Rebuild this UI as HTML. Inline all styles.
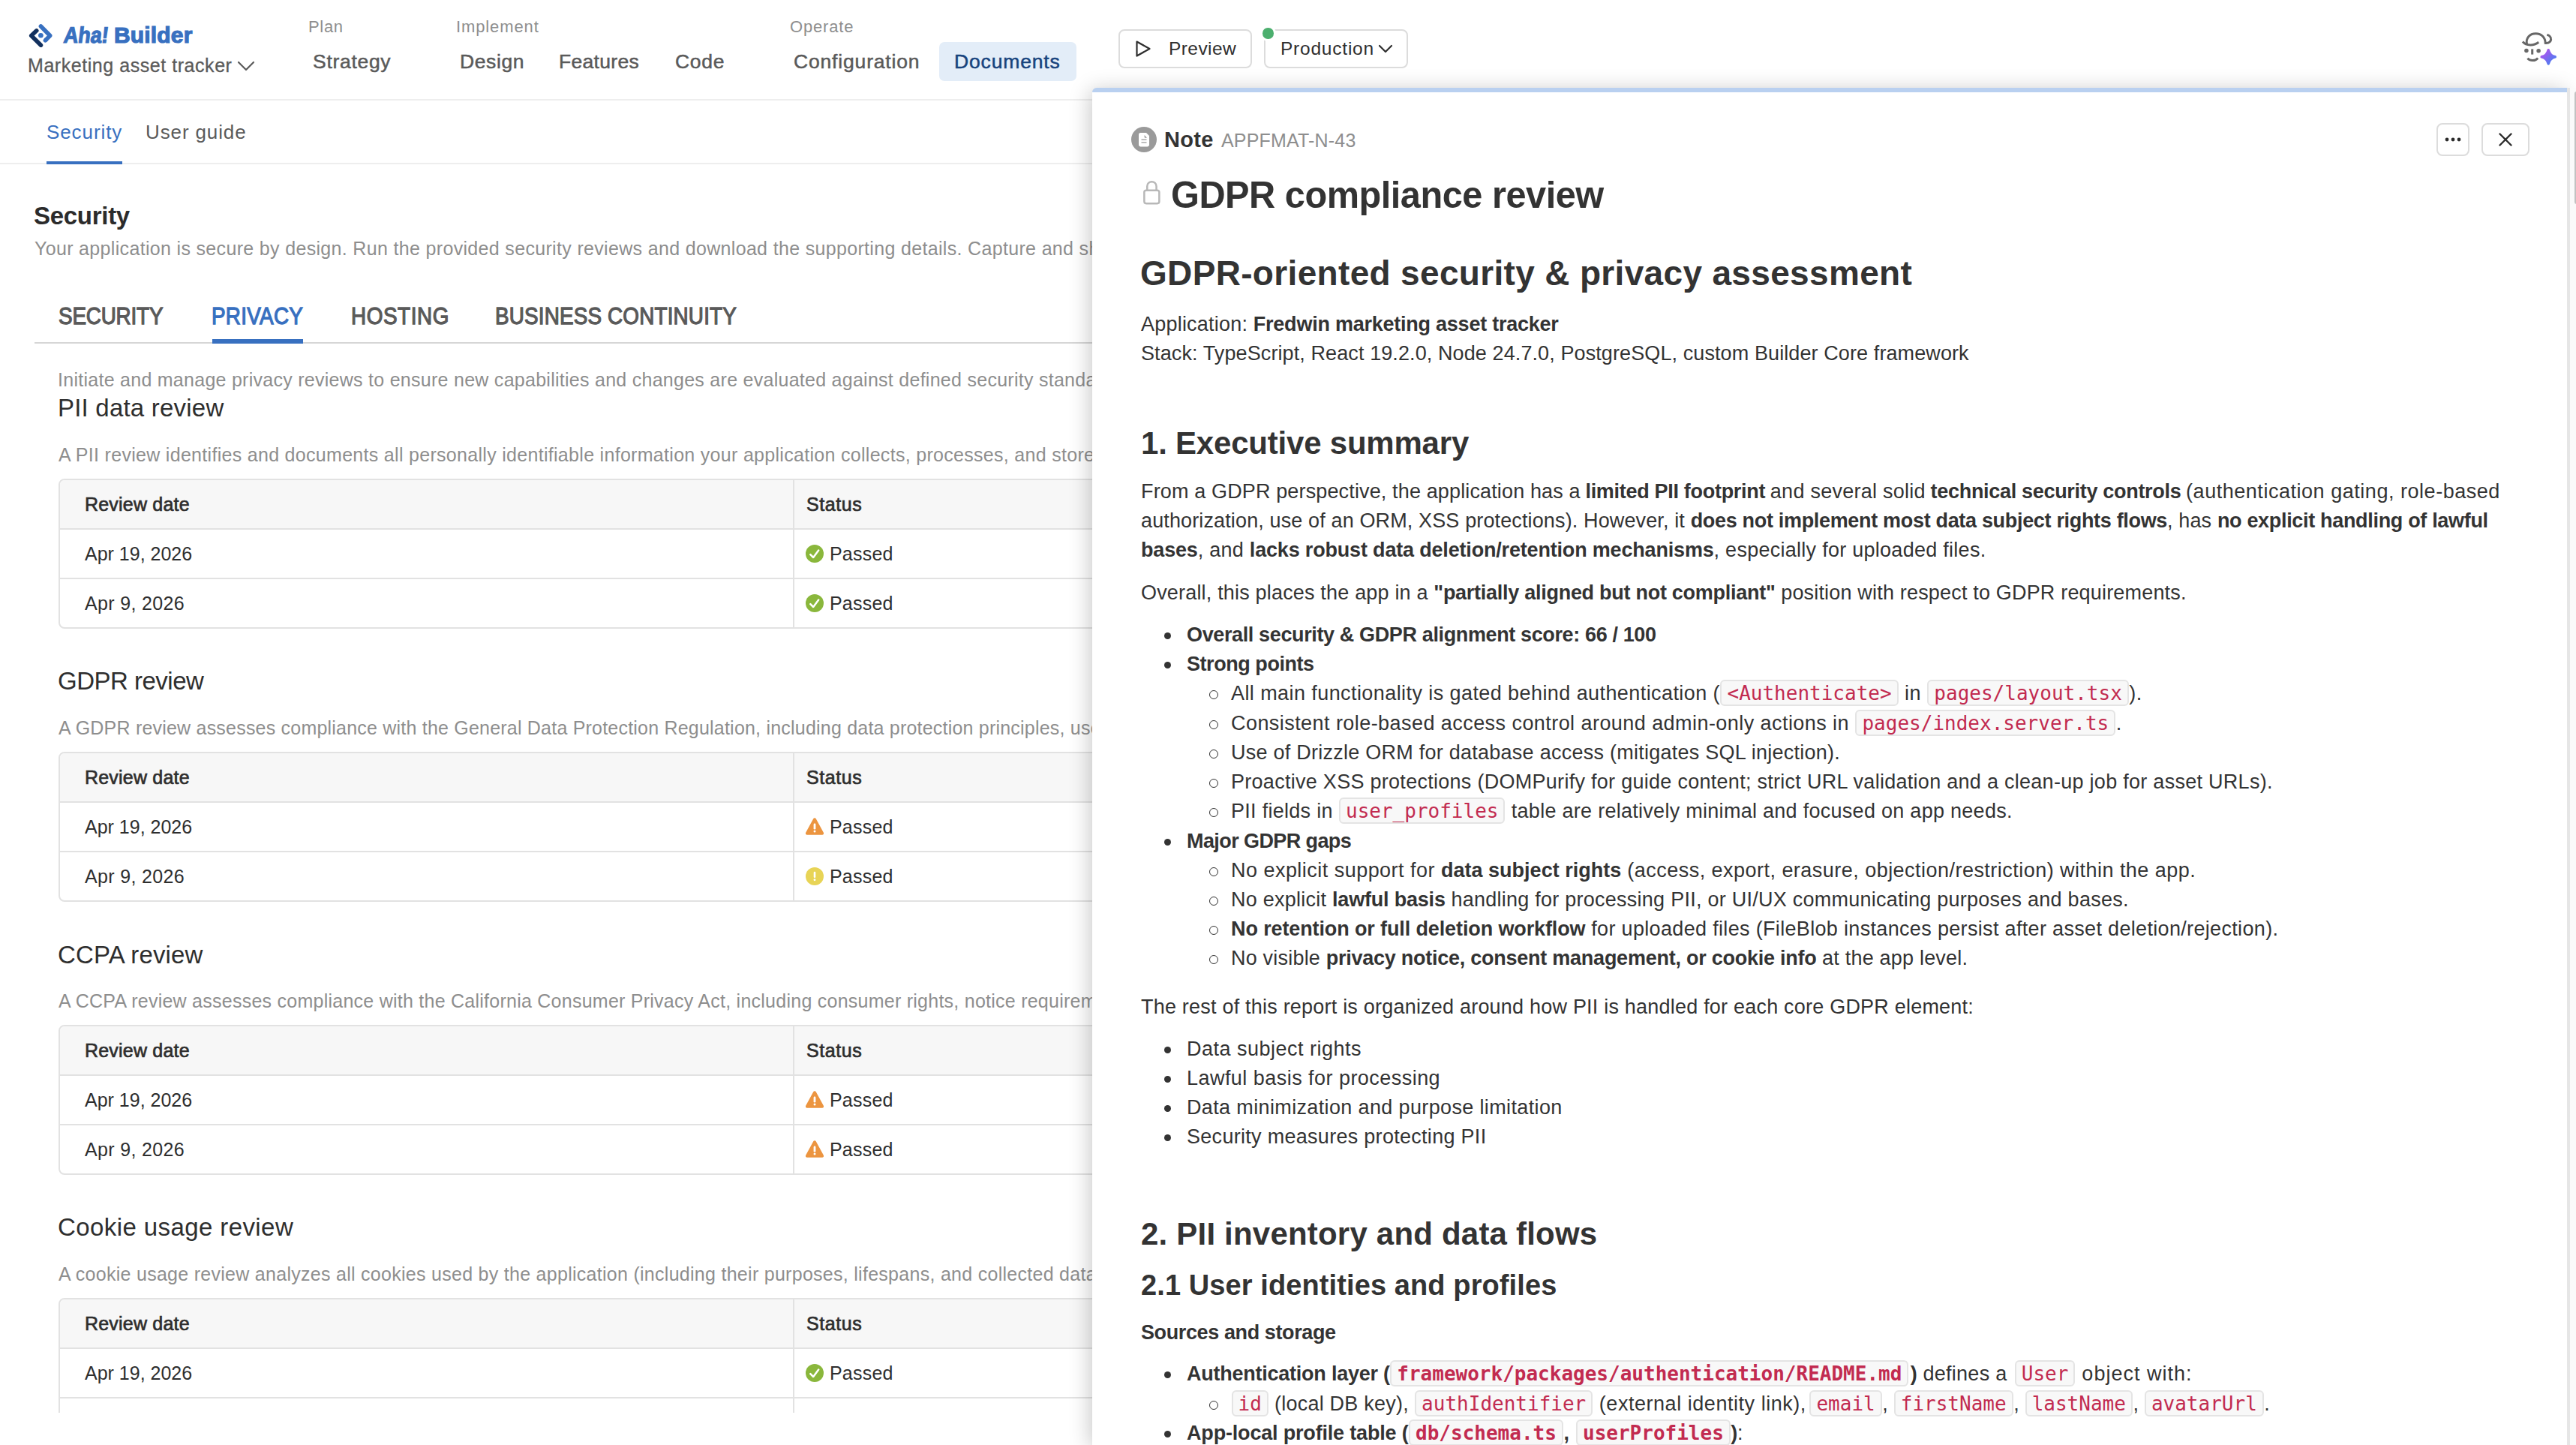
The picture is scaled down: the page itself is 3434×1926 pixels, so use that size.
<!DOCTYPE html>
<html lang="en">
<head>
<meta charset="utf-8">
<title>GDPR compliance review - Aha! Builder</title>
<style>
*{box-sizing:border-box;margin:0;padding:0}
html,body{width:3434px;height:1926px;overflow:hidden;background:#fff}
body{font-family:"Liberation Sans",sans-serif;color:#333;position:relative}
.abs{position:absolute;white-space:nowrap}
@media (min-resolution:1.5dppx){html{zoom:.5}}
/* ---------- header ---------- */
#hdr{position:absolute;left:0;top:0;width:3434px;height:134px;border-bottom:2px solid #eee;background:#fff}
#brand,#brand2{left:83px;top:29px;font-size:30px;line-height:36px;font-weight:bold;color:#3870c0;-webkit-text-stroke:1.2px #3870c0}
#brand2{left:152px}
#brand i{display:inline-block;font-style:normal;transform:skewX(-7deg) scaleX(.9);transform-origin:0 100%}
#proj{left:37px;top:70px;font-size:25px;line-height:34px;color:#5a5a5a;-webkit-text-stroke:.3px #5a5a5a}
.grp{top:22px;font-size:22px;line-height:28px;color:#8e8e8e}
.nav{top:64px;font-size:26.5px;line-height:36px;color:#5a5a5a;-webkit-text-stroke:.5px #5a5a5a}
#docpill{left:1252px;top:56px;width:183px;height:52px;border-radius:7px;background:#e3edf8}
#docs{color:#17437d;-webkit-text-stroke:.5px #17437d}
.btn{position:absolute;border:2px solid #dcdcdc;border-radius:8px;background:#fff}
.btntx{font-size:24.5px;line-height:30px;color:#2e2e2e}
/* ---------- left page ---------- */
#subtabs{position:absolute;left:0;top:136px;width:3434px;height:83px;border-bottom:2px solid #eee}
.st{top:158px;font-size:26px;line-height:36px}
#leftclip{position:absolute;left:0;top:219px;width:1456px;height:1664px;overflow:hidden}
.h-sec{font-size:33px;line-height:40px;font-weight:bold;color:#2b2b2b}
.muted{font-size:25px;line-height:32px;color:#8e8e8e}
.tab{top:402px;font-size:32px;line-height:38px;color:#5a5a5a;-webkit-text-stroke:1.3px #5a5a5a}
.tab span{display:inline-block;transform:scaleX(.87);transform-origin:0 50%}
.h3{font-size:33px;line-height:40px;color:#2e2e2e}
.tbl{position:absolute;left:78px;width:1500px;border:2px solid #e2e2e2;border-radius:8px;overflow:hidden;background:#fff}
.tr{height:66px;border-bottom:2px solid #e2e2e2;position:relative;font-size:25px;line-height:64px;color:#2e2e2e}
.tr:last-child{border-bottom:0;height:64px}
.tr.th{background:#f7f7f7;color:#2e2e2e;-webkit-text-stroke:.7px #2e2e2e}
.tr .c1{position:absolute;left:33px;top:0}
.tr .c2{position:absolute;left:977px;top:0;bottom:0;border-left:2px solid #e2e2e2;padding-left:17px;width:600px}
.tr .c2 span{position:absolute;left:47px;top:0}
.ic{position:absolute;left:15px;top:20px;width:24px;height:24px}
/* ---------- right panel ---------- */
#panel{position:absolute;left:1456px;top:117px;width:1966px;height:1809px;background:#fff;border-top:6px solid #b9d0f0;border-radius:6px 0 0 0;box-shadow:-3px 3px 28px rgba(0,0,0,.22)}
#sbar{z-index:2;position:absolute;left:3422px;top:117px;width:12px;height:1809px;background:#fafafa;border-left:4px solid #e6e6e6}
#thumb{z-index:3;position:absolute;left:3432px;top:122px;width:4px;height:150px;background:#c2c2c2;border-radius:3px 0 0 3px}
#pc{position:absolute;left:-1456px;top:-123px;width:3434px;height:1926px}
.bd{font-size:27px;line-height:39px;color:#333}
.bd b{color:#333}
.hh{font-weight:bold;color:#333}
code{font-family:"DejaVu Sans Mono","Liberation Mono",monospace;font-size:26px;line-height:30px;color:#c22b50;background:#f8f8f8;border:2px solid #e4e4e4;border-radius:6px;padding:1px 7px 0;margin:0 .5px;letter-spacing:0 !important;display:inline-block;height:35px;vertical-align:baseline;position:relative;top:0px}
b code{font-weight:bold}
ul{list-style:none}
li{position:relative}
.l1>li:before{content:"";position:absolute;left:-30.5px;top:15.5px;width:9px;height:9px;border-radius:50%;background:#333}
.l2{padding-left:59px}
.l1>li.nb:before{display:none}
.l2>li:before{content:"";position:absolute;left:-29.5px;top:15px;width:10px;height:10px;border-radius:50%;border:1.4px solid #333;background:#fff}
[id^=f_],[class^=f_]{letter-spacing:var(--ls,0px)}
.bd b{letter-spacing:calc(var(--ls,0px) - .45px)}
#f_p1b,#f_p1c,#f_p1d,#f_p1e{margin-left:-.8px}
/*FIT-START*/
#f_aha{--ls:-0.19px}
#f_app{--ls:0.21px}
#f_appf{--ls:0.18px}
#f_b1{--ls:0.08px}
#f_b10{--ls:0.25px}
#f_b11{--ls:0.33px}
#f_b12{--ls:0.20px}
#f_b2{--ls:0.00px}
#f_b3{--ls:0.42px}
#f_b4{--ls:0.44px}
#f_b5{--ls:0.25px}
#f_b6{--ls:0.28px}
#f_b7{--ls:0.28px}
#f_b8{--ls:-0.14px}
#f_b9{--ls:0.47px}
#f_bld{--ls:0.17px}
#f_brand{--ls:-0.73px}
#f_c1{--ls:0.50px}
#f_c2{--ls:0.46px}
#f_c3{--ls:0.36px}
#f_c4{--ls:0.29px}
#f_code{--ls:0.68px}
#f_config{--ls:0.83px}
#f_d1a{--ls:0.21px}
#f_d1b{--ls:0.27px}
#f_d1c{--ls:1.00px}
#f_d2a{--ls:0.22px}
#f_d2b{--ls:0.54px}
#f_d3a{--ls:0.27px}
#f_design{--ls:0.60px}
#f_docs{--ls:0.84px}
#f_es{--ls:-0.21px}
#f_feat{--ls:0.31px}
#f_h1{--ls:0.21px}
#f_h2{--ls:-0.50px}
#f_h3{--ls:0.14px}
#f_h4{--ls:0.41px}
#f_hsec{--ls:-0.29px}
#f_impl{--ls:0.88px}
#f_m0,.f_m0{--ls:0.33px}
#f_m1,.f_m1{--ls:0.27px}
#f_m2,.f_m2{--ls:0.30px}
#f_m3,.f_m3{--ls:0.21px}
#f_m4,.f_m4{--ls:0.25px}
#f_m5,.f_m5{--ls:0.28px}
#f_note{--ls:0.33px}
#f_oper{--ls:0.84px}
#f_p1a{--ls:0.14px}
#f_p1b{--ls:0.15px}
#f_p1c{--ls:0.26px}
#f_p1d{--ls:0.14px}
#f_p1e{--ls:0.53px}
#f_p2{--ls:0.13px}
#f_p3{--ls:0.27px}
#f_p4{--ls:0.18px}
#f_p5{--ls:0.21px}
#f_pii{--ls:0.20px}
#f_plan{--ls:0.66px}
#f_prev{--ls:0.42px}
#f_prod{--ls:0.78px}
#f_proj{--ls:0.55px}
#f_rh1{--ls:0.33px}
#f_sec{--ls:0.91px}
#f_ss{--ls:-0.39px}
#f_stack{--ls:0.10px}
#f_strat{--ls:0.70px}
#f_t1{--ls:-0.21px}
#f_t2{--ls:0.33px}
#f_t3{--ls:0.67px}
#f_t4{--ls:0.20px}
#f_title{--ls:-0.52px}
#f_ug{--ls:0.88px}
#f_ui{--ls:0.10px}
.f_date{--ls:0.00px}
.f_date2{--ls:0.35px}
.f_passed{--ls:0.20px}
.f_rd{--ls:0.20px}
.f_status{--ls:0.60px}
/*FIT-END*/
</style>
</head>
<body>

<!-- ================= HEADER ================= -->
<div id="hdr">
  <svg class="abs" style="left:30px;top:20px" width="50" height="50" viewBox="0 0 50 50" fill="none" stroke-width="5.5" stroke-linejoin="round">
    <path d="M18.8 20.8 L11.7 27.5 L24.5 40.2" stroke="#12305e" stroke-linecap="round"/>
    <path d="M30.4 33.9 L36.7 27.5 L24.4 15" stroke="#3870c0" stroke-linecap="round"/>
    <path d="M30.4 33.9 L32 32.3" stroke="#3870c0" stroke-linecap="butt"/>
    <circle cx="24.4" cy="27.3" r="3.3" fill="#3870c0" stroke="none"/>
  </svg>
  <div class="abs" id="brand"><i id="f_aha">Aha!</i></div><div class="abs" id="brand2"><span id="f_bld">Builder</span></div>
  <div class="abs" id="proj"><span id="f_proj">Marketing asset tracker</span></div>
  <svg class="abs" style="left:316px;top:81px" width="24" height="14" viewBox="0 0 24 14"><path d="M2 2 L12 12 L22 2" fill="none" stroke="#5a5a5a" stroke-width="2.2" stroke-linecap="round" stroke-linejoin="round"/></svg>

  <div class="abs grp" style="left:411px"><span id="f_plan">Plan</span></div>
  <div class="abs grp" style="left:608px"><span id="f_impl">Implement</span></div>
  <div class="abs grp" style="left:1053px"><span id="f_oper">Operate</span></div>
  <div class="abs nav" style="left:417px"><span id="f_strat">Strategy</span></div>
  <div class="abs nav" style="left:613px"><span id="f_design">Design</span></div>
  <div class="abs nav" style="left:745px"><span id="f_feat">Features</span></div>
  <div class="abs nav" style="left:900px"><span id="f_code">Code</span></div>
  <div class="abs nav" style="left:1058px"><span id="f_config">Configuration</span></div>
  <div class="abs" id="docpill"></div>
  <div class="abs nav" id="docs" style="left:1272px"><span id="f_docs">Documents</span></div>

  <div class="btn" style="left:1491px;top:39px;width:178px;height:52px"></div>
  <svg class="abs" style="left:1513px;top:53px" width="22" height="24" viewBox="0 0 22 24"><path d="M2.5 2.5 L19.5 12 L2.5 21.5z" fill="none" stroke="#2e2e2e" stroke-width="2.2" stroke-linejoin="round"/></svg>
  <div class="abs btntx" style="left:1558px;top:50px"><span id="f_prev">Preview</span></div>
  <div class="btn" style="left:1685px;top:39px;width:192px;height:52px"></div>
  <div class="abs" style="left:1683px;top:37px;width:14.5px;height:14.5px;border-radius:50%;background:#4caf6e;box-shadow:0 0 0 3px #fff"></div>
  <div class="abs btntx" style="left:1707px;top:50px"><span id="f_prod">Production</span></div>
  <svg class="abs" style="left:1837px;top:59px" width="20" height="12" viewBox="0 0 20 12"><path d="M2 2 L10 10 L18 2" fill="none" stroke="#2e2e2e" stroke-width="2.2" stroke-linecap="round" stroke-linejoin="round"/></svg>
</div>

<!-- ================= LEFT PAGE ================= -->
<div id="subtabs"></div>
<div class="abs st" style="left:62px;color:#3870c0"><span id="f_sec">Security</span></div>
<div class="abs" style="left:62px;top:215px;width:101px;height:4px;background:#3870c0"></div>
<div class="abs st" style="left:194px;color:#5a5a5a"><span id="f_ug">User guide</span></div>

<div id="leftclip">
 <div style="position:absolute;left:0;top:-219px;width:1456px;height:1926px">
  <div class="abs h-sec" style="left:45px;top:268px"><span id="f_hsec">Security</span></div>
  <div class="abs muted" style="left:46px;top:315px"><span id="f_m0">Your application is secure by design. Run the provided security reviews and download the supporting details.</span><span class="f_m0"> Capture and share</span></div>

  <div class="abs" style="left:46px;top:456px;width:1500px;height:2px;background:#d6d6d6"></div>
  <div class="abs tab" style="left:78px"><span id="f_t1">SECURITY</span></div>
  <div class="abs tab" style="left:282px;color:#3870c0;-webkit-text-stroke-color:#3870c0"><span id="f_t2">PRIVACY</span></div>
  <div class="abs" style="left:283px;top:452px;width:121px;height:6px;background:#3870c0"></div>
  <div class="abs tab" style="left:468px"><span id="f_t3">HOSTING</span></div>
  <div class="abs tab" style="left:660px"><span id="f_t4">BUSINESS CONTINUITY</span></div>

  <div class="abs muted" style="left:77px;top:490px"><span id="f_m1">Initiate and manage privacy reviews to ensure new capabilities and changes are evaluated against defined</span><span class="f_m1"> security standards.</span></div>

  <!-- PII -->
  <div class="abs h3" style="left:77px;top:524px"><span id="f_h1">PII data review</span></div>
  <div class="abs muted" style="left:78px;top:590px"><span id="f_m2">A PII review identifies and documents all personally identifiable information your application collects,</span><span class="f_m2"> processes, and stores.</span></div>
  <div class="tbl" style="top:638px">
    <div class="tr th"><div class="c1"><span class="f_rd">Review date</span></div><div class="c2"><span class="f_status" style="left:16px">Status</span></div></div>
    <div class="tr"><div class="c1"><span class="f_date">Apr 19, 2026</span></div><div class="c2"><svg class="ic" viewBox="0 0 24 24"><use href="#i-ok"/></svg><span class="f_passed">Passed</span></div></div>
    <div class="tr"><div class="c1"><span class="f_date2">Apr 9, 2026</span></div><div class="c2"><svg class="ic" viewBox="0 0 24 24"><use href="#i-ok"/></svg><span class="f_passed">Passed</span></div></div>
  </div>

  <!-- GDPR -->
  <div class="abs h3" style="left:77px;top:888px"><span id="f_h2">GDPR review</span></div>
  <div class="abs muted" style="left:78px;top:954px"><span id="f_m3">A GDPR review assesses compliance with the General Data Protection Regulation, including data protection principles,</span><span class="f_m3"> user rights</span></div>
  <div class="tbl" style="top:1002px">
    <div class="tr th"><div class="c1"><span class="f_rd">Review date</span></div><div class="c2"><span class="f_status" style="left:16px">Status</span></div></div>
    <div class="tr"><div class="c1"><span class="f_date">Apr 19, 2026</span></div><div class="c2"><svg class="ic" viewBox="0 0 24 24"><use href="#i-warn"/></svg><span class="f_passed">Passed</span></div></div>
    <div class="tr"><div class="c1"><span class="f_date2">Apr 9, 2026</span></div><div class="c2"><svg class="ic" viewBox="0 0 24 24"><use href="#i-info"/></svg><span class="f_passed">Passed</span></div></div>
  </div>

  <!-- CCPA -->
  <div class="abs h3" style="left:77px;top:1253px"><span id="f_h3">CCPA review</span></div>
  <div class="abs muted" style="left:78px;top:1318px"><span id="f_m4">A CCPA review assesses compliance with the California Consumer Privacy Act, including consumer rights,</span><span class="f_m4"> notice requirements</span></div>
  <div class="tbl" style="top:1366px">
    <div class="tr th"><div class="c1"><span class="f_rd">Review date</span></div><div class="c2"><span class="f_status" style="left:16px">Status</span></div></div>
    <div class="tr"><div class="c1"><span class="f_date">Apr 19, 2026</span></div><div class="c2"><svg class="ic" viewBox="0 0 24 24"><use href="#i-warn"/></svg><span class="f_passed">Passed</span></div></div>
    <div class="tr"><div class="c1"><span class="f_date2">Apr 9, 2026</span></div><div class="c2"><svg class="ic" viewBox="0 0 24 24"><use href="#i-warn"/></svg><span class="f_passed">Passed</span></div></div>
  </div>

  <!-- Cookie -->
  <div class="abs h3" style="left:77px;top:1616px"><span id="f_h4">Cookie usage review</span></div>
  <div class="abs muted" style="left:78px;top:1682px"><span id="f_m5">A cookie usage review analyzes all cookies used by the application (including their purposes, lifespans, and collected</span><span class="f_m5"> data)</span></div>
  <div class="tbl" style="top:1730px">
    <div class="tr th"><div class="c1"><span class="f_rd">Review date</span></div><div class="c2"><span class="f_status" style="left:16px">Status</span></div></div>
    <div class="tr"><div class="c1"><span class="f_date">Apr 19, 2026</span></div><div class="c2"><svg class="ic" viewBox="0 0 24 24"><use href="#i-ok"/></svg><span class="f_passed">Passed</span></div></div>
    <div class="tr"><div class="c1"><span class="f_date2">Apr 9, 2026</span></div><div class="c2"><svg class="ic" viewBox="0 0 24 24"><use href="#i-ok"/></svg><span class="f_passed">Passed</span></div></div>
  </div>

 </div>
</div>

<svg width="0" height="0" style="position:absolute">
 <defs>
  <g id="i-ok"><circle cx="12" cy="12" r="12" fill="#8ab73c"/><path d="M6.3 13.2 L10.2 17 L17.2 7.6" fill="none" stroke="#fff" stroke-width="2.5" stroke-linecap="round" stroke-linejoin="round"/></g>
  <g id="i-warn"><path d="M12 0.3 a2 2 0 0 1 1.75 1 L23.85 19.8 a2 2 0 0 1 -1.75 3 H1.9 a2 2 0 0 1 -1.75 -3 L10.25 1.3 A2 2 0 0 1 12 0.3z" fill="#ec9540"/><rect x="10.6" y="7.6" width="2.8" height="8" rx="1.3" fill="#fff"/><circle cx="12" cy="17.9" r="1.5" fill="#fff"/></g>
  <g id="i-info"><circle cx="12" cy="12" r="12" fill="#e8d456"/><rect x="10.7" y="5.8" width="2.6" height="8.2" rx="1.2" fill="#fff"/><circle cx="12" cy="16.8" r="1.45" fill="#fff"/></g>
 </defs>
</svg>

<!-- ================= RIGHT PANEL ================= -->
<div id="sbar"></div><div id="thumb"></div>
<div id="panel"><div id="pc">
  <div class="abs" style="left:1508px;top:169px;width:34px;height:34px;border-radius:50%;background:#9a9a9a"></div>
  <svg class="abs" style="left:1516px;top:175px" width="18" height="22" viewBox="0 0 18 22"><path d="M4.4 1.9 H12 L16 6 V18 a2.4 2.4 0 0 1 -2.4 2.4 H4.4 a2.4 2.4 0 0 1 -2.4 -2.4 V4.3 a2.4 2.4 0 0 1 2.4 -2.4z" fill="#fff"/><path d="M9.6 4.9 L13 8.8 H10.6 a1 1 0 0 1 -1 -1z" fill="#9a9a9a"/><path d="M5.5 11.1 H12.5 M5.5 14.9 H12.5" stroke="#9a9a9a" stroke-width="1.4"/></svg>
  <div class="abs hh" style="left:1552px;top:167px;font-size:29px;line-height:38px"><span id="f_note">Note</span></div>
  <div class="abs" style="left:1628px;top:169px;font-size:25px;line-height:36px;color:#8e8e8e"><span id="f_appf">APPFMAT-N-43</span></div>

  <div class="btn" style="left:3248px;top:164px;width:44px;height:44px;border-radius:8px"></div>
  <svg class="abs" style="left:3259px;top:182px" width="22" height="8" viewBox="0 0 22 8"><circle cx="3" cy="4" r="2.4" fill="#2b2b2b"/><circle cx="11" cy="4" r="2.4" fill="#2b2b2b"/><circle cx="19" cy="4" r="2.4" fill="#2b2b2b"/></svg>
  <div class="btn" style="left:3308px;top:164px;width:64px;height:44px;border-radius:8px"></div>
  <svg class="abs" style="left:3331px;top:177px" width="18" height="18" viewBox="0 0 18 18"><path d="M1.5 1.5 L16.5 16.5 M16.5 1.5 L1.5 16.5" stroke="#2b2b2b" stroke-width="2.4" stroke-linecap="round"/></svg>

  <svg class="abs" style="left:1523px;top:240px" width="25" height="34" viewBox="0 0 25 34"><path d="M6.25 13.5 V8.3 a6.15 6.15 0 0 1 12.3 0 V13.5" fill="none" stroke="#b8b8b8" stroke-width="2.5"/><rect x="2.35" y="13.75" width="20" height="17.4" rx="2.6" fill="none" stroke="#b8b8b8" stroke-width="2.5"/></svg>
  <div class="abs hh" style="left:1561px;top:230px;font-size:50.5px;line-height:60px"><span id="f_title" style="display:inline-block;transform:scaleX(.965);transform-origin:0 50%">GDPR compliance review</span></div>

  <div class="abs hh" style="left:1520px;top:334px;font-size:46px;line-height:60px"><span id="f_rh1">GDPR-oriented security &amp; privacy assessment</span></div>

  <div class="abs bd" style="left:1521px;top:413px"><span id="f_app">Application: <b>Fredwin marketing asset tracker</b></span><br><span id="f_stack">Stack: TypeScript, React 19.2.0, Node 24.7.0, PostgreSQL, custom Builder Core framework</span></div>

  <div class="abs hh" style="left:1521px;top:566px;font-size:42px;line-height:50px"><span id="f_es">1. Executive summary</span></div>

  <div class="abs bd" style="left:1521px;top:636px"><span id="f_p1a">From a GDPR perspective, the application has a</span> <b id="f_p1b">limited PII footprint</b> <span id="f_p1c">and several solid</span> <b id="f_p1d">technical security controls</b> <span id="f_p1e">(authentication gating, role-based</span><br><span id="f_p2">authorization, use of an ORM, XSS protections). However, it <b>does not implement most data subject rights flows</b>, has <b>no explicit handling of lawful</b></span><br><span id="f_p3"><b>bases</b>, and <b>lacks robust data deletion/retention mechanisms</b>, especially for uploaded files.</span></div>

  <div class="abs bd" style="left:1521px;top:771px"><span id="f_p4">Overall, this places the app in a <b>"partially aligned but not compliant"</b> position with respect to GDPR requirements.</span></div>

  <ul class="abs bd l1" style="left:1582px;top:827px">
    <li><b id="f_b1">Overall security &amp; GDPR alignment score: 66 / 100</b></li>
    <li><b id="f_b2">Strong points</b>
      <ul class="l2">
        <li style="height:40px"><span id="f_b3">All main functionality is gated behind authentication (<code>&lt;Authenticate&gt;</code> in <code>pages/layout.tsx</code>).</span></li>
        <li><span id="f_b4">Consistent role-based access control around admin-only actions in <code>pages/index.server.ts</code>.</span></li>
        <li><span id="f_b5">Use of Drizzle ORM for database access (mitigates SQL injection).</span></li>
        <li><span id="f_b6">Proactive XSS protections (DOMPurify for guide content; strict URL validation and a clean-up job for asset URLs).</span></li>
        <li style="height:40px"><span id="f_b7">PII fields in <code>user_profiles</code> table are relatively minimal and focused on app needs.</span></li>
      </ul>
    </li>
    <li><b id="f_b8">Major GDPR gaps</b>
      <ul class="l2">
        <li><span id="f_b9">No explicit support for <b>data subject rights</b> (access, export, erasure, objection/restriction) within the app.</span></li>
        <li><span id="f_b10">No explicit <b>lawful basis</b> handling for processing PII, or UI/UX communicating purposes and bases.</span></li>
        <li><span id="f_b11"><b>No retention or full deletion workflow</b> for uploaded files (FileBlob instances persist after asset deletion/rejection).</span></li>
        <li><span id="f_b12">No visible <b>privacy notice, consent management, or cookie info</b> at the app level.</span></li>
      </ul>
    </li>
  </ul>

  <div class="abs bd" style="left:1521px;top:1323px"><span id="f_p5">The rest of this report is organized around how PII is handled for each core GDPR element:</span></div>

  <ul class="abs bd l1" style="left:1582px;top:1379px">
    <li><span id="f_c1">Data subject rights</span></li>
    <li><span id="f_c2">Lawful basis for processing</span></li>
    <li><span id="f_c3">Data minimization and purpose limitation</span></li>
    <li><span id="f_c4">Security measures protecting PII</span></li>
  </ul>

  <div class="abs hh" style="left:1521px;top:1620px;font-size:42px;line-height:50px"><span id="f_pii">2. PII inventory and data flows</span></div>
  <div class="abs hh" style="left:1521px;top:1690px;font-size:38px;line-height:46px"><span id="f_ui">2.1 User identities and profiles</span></div>
  <div class="abs hh" style="left:1521px;top:1757px;font-size:27px;line-height:39px"><span id="f_ss">Sources and storage</span></div>

  <ul class="abs bd l1" style="left:1582px;top:1812px">
    <li style="height:40px"><b id="f_d1a">Authentication layer (</b><b><code>framework/packages/authentication/README.md</code></b><span id="f_d1b" style="margin-left:2px"><b>)</b> defines a </span><code style="margin-left:2.5px">User</code><span id="f_d1c"> object with:</span></li>
    <li class="nb"><ul class="l2">
        <li style="height:39px"><code>id</code><span id="f_d2a"> (local DB key), </span><code>authIdentifier</code><span id="f_d2b" style="margin-right:-4px"> (external identity link), </span><code>email</code>, <code>firstName</code>, <code>lastName</code>, <code>avatarUrl</code>.</li>
      </ul>
    </li>
    <li><b id="f_d3a">App-local profile table (</b><b><code>db/schema.ts</code>, <code style="margin-left:2.5px">userProfiles</code>)</b>:</li>
  </ul>
</div></div>

<!-- AI assistant icon -->
<svg class="abs" style="left:3340px;top:30px" width="90" height="70" viewBox="0 0 90 70">
  <defs><linearGradient id="spark" gradientUnits="userSpaceOnUse" x1="50" y1="38" x2="64" y2="53"><stop offset="0" stop-color="#b352ee"/><stop offset="1" stop-color="#4a7ef0"/></linearGradient></defs>
  <g fill="none" stroke="#676767" stroke-width="3">
    <path d="M22.9 25.4 C28 31.2 37.5 31.3 44.2 26.2"/>
    <path d="M28.6 29 C26.6 20.5 32.5 14.7 40.4 14.7 C48 14.7 53 20 53.2 27.4 C58.2 27.8 61.2 24.8 60.5 21.3 C60 18.4 58 17 55.3 16.4"/>
    <path d="M35.7 35.4 V42.6"/>
    <path d="M29.4 47.8 C33 51.6 39.6 51.6 43.2 47.4"/>
  </g>
  <circle cx="27.9" cy="37.6" r="2.75" fill="#676767"/><circle cx="44.1" cy="37.8" r="2.75" fill="#676767"/>
  <path d="M57.2 36.8 Q58.9 44.1 66.2 45.8 Q58.9 47.5 57.2 54.8 Q55.5 47.5 48.2 45.8 Q55.5 44.1 57.2 36.8z" fill="url(#spark)" stroke="url(#spark)" stroke-width="3.6" stroke-linejoin="round"/>
</svg>

</body>
</html>
